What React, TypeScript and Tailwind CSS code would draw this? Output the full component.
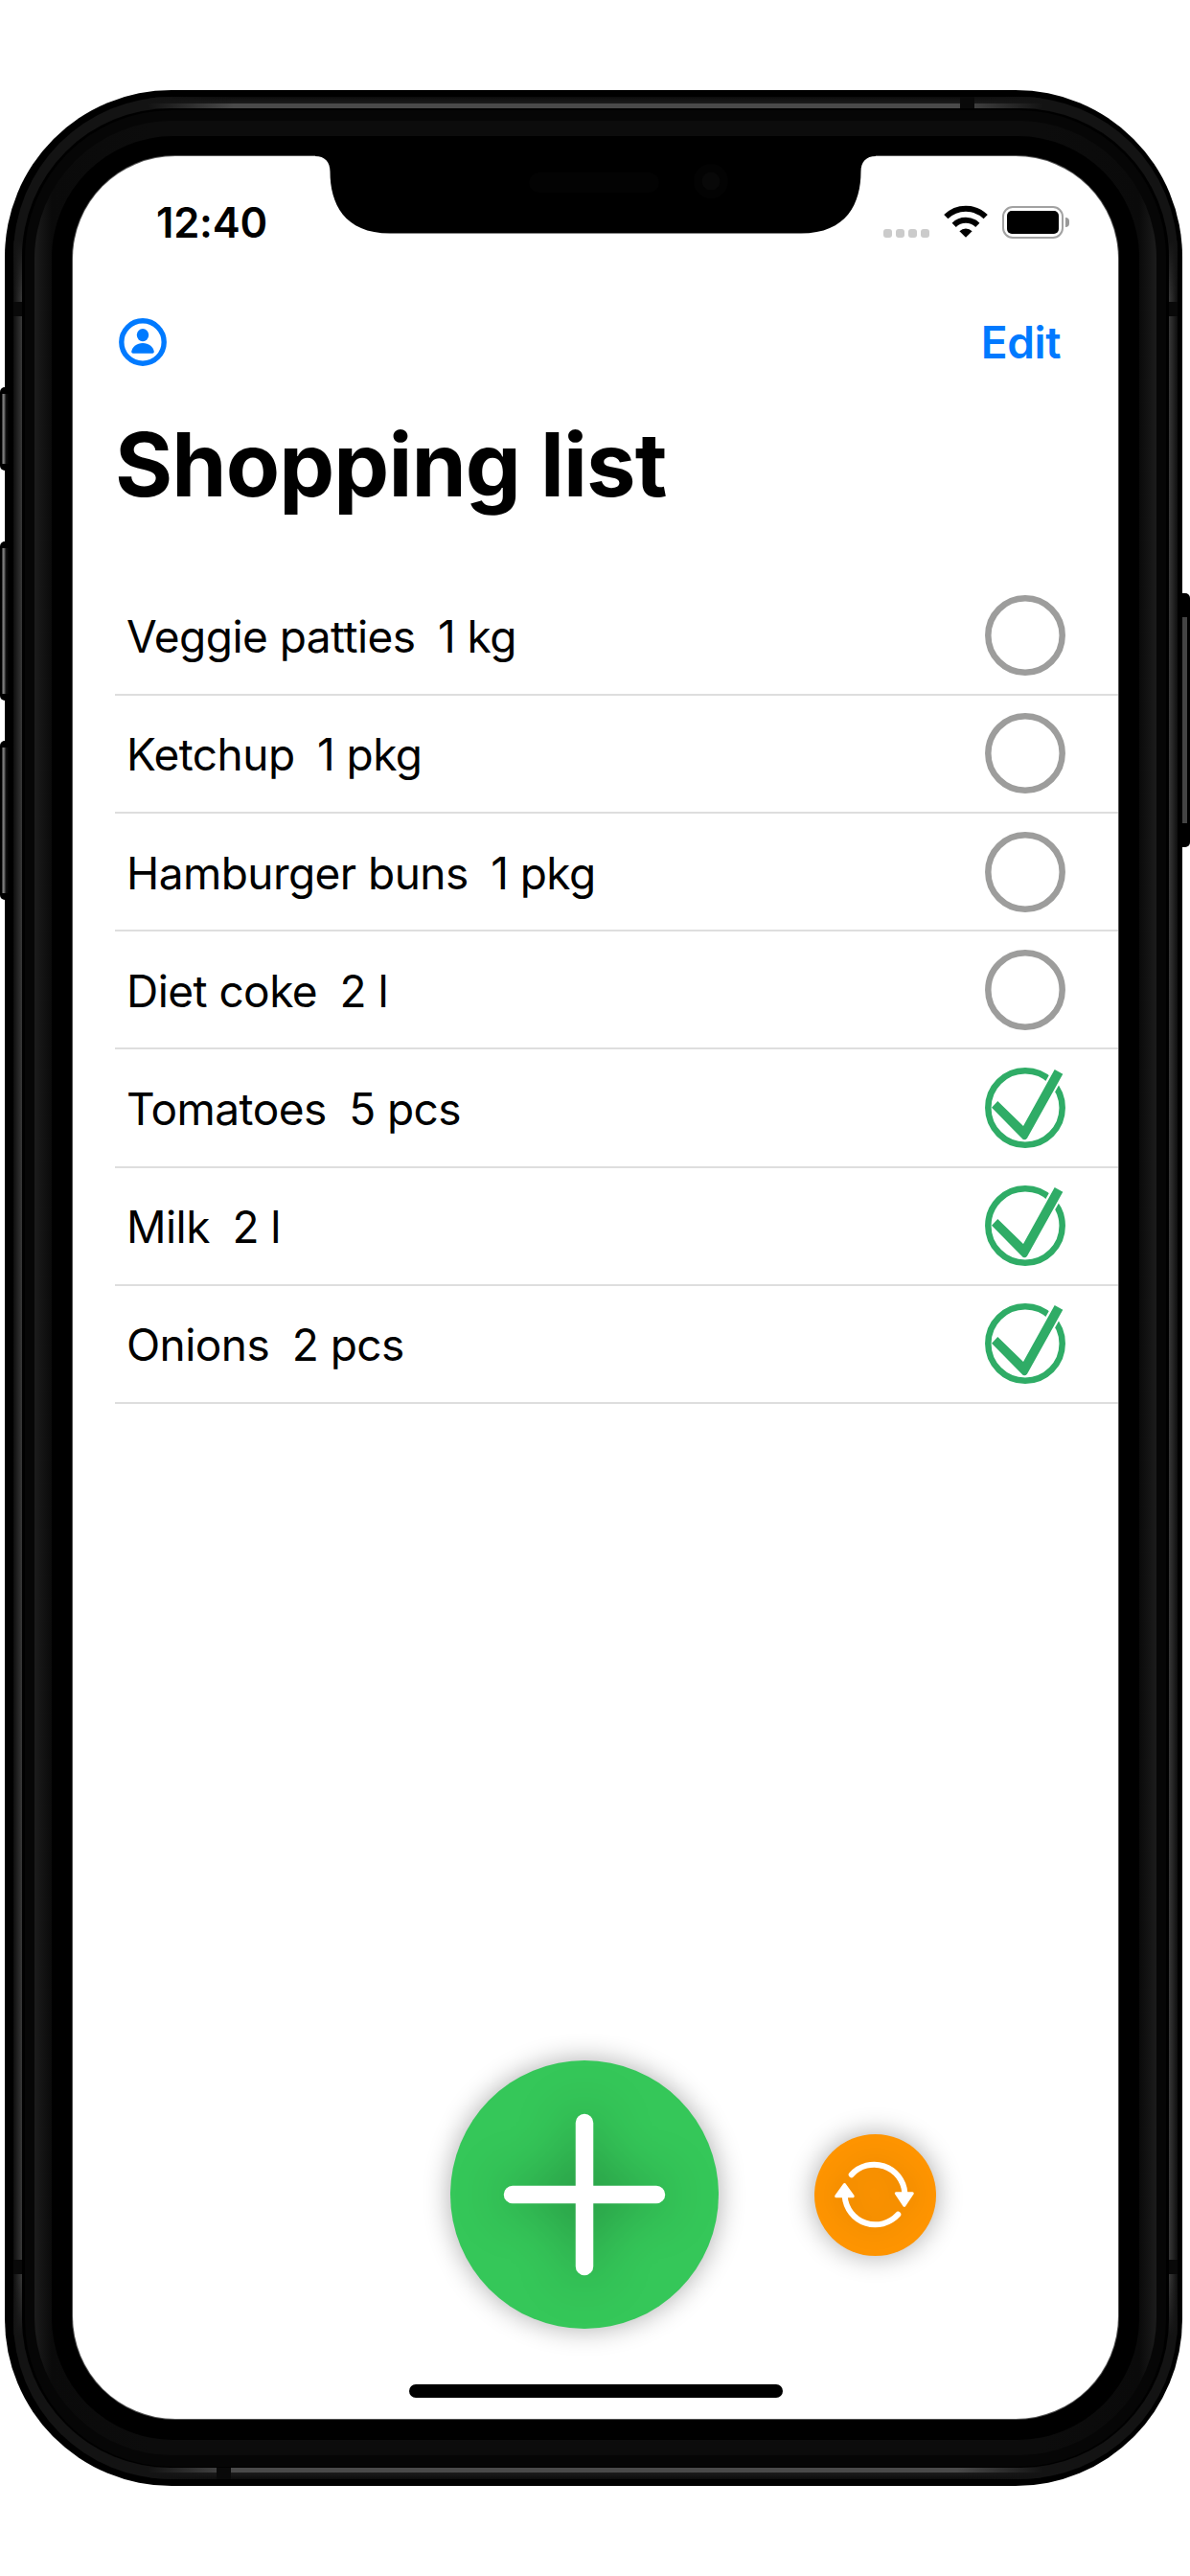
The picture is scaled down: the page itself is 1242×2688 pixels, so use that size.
import React from "react";

type Item = { name: string; qty: string; done: boolean };

const items: Item[] = [
  { name: "Veggie patties", qty: "1 kg", done: false },
  { name: "Ketchup", qty: "1 pkg", done: false },
  { name: "Hamburger buns", qty: "1 pkg", done: false },
  { name: "Diet coke", qty: "2 l", done: false },
  { name: "Tomatoes", qty: "5 pcs", done: true },
  { name: "Milk", qty: "2 l", done: true },
  { name: "Onions", qty: "2 pcs", done: true },
];

function CheckCircle({ done }: { done: boolean }) {
  return (
    <svg className="size-[84px] overflow-visible" viewBox="0 0 84 84" fill="none">
      <circle cx="42" cy="42" r="38.7" stroke={done ? "#2fac66" : "#9d9d9c"} strokeWidth="6.5" />
      {done && (
        <>
          <path d="M55 43 80 -1" stroke="#fff" strokeWidth="14" />
          <path d="M13.3 35 40 61 72.7 2 81.3 6.8 44 73.8Q41.2 76.8 38.5 73.8L7 41.7Z" fill="#2fac66" />
        </>
      )}
    </svg>
  );
}

function PersonIcon() {
  return (
    <svg className="size-[50px]" viewBox="0 0 50 50">
      <circle cx="25" cy="25" r="22.2" fill="none" stroke="#007aff" strokeWidth="5.4" />
      <ellipse cx="25" cy="17.6" rx="6.2" ry="6.6" fill="#007aff" />
      <path d="M15 36.8C13.5 36.8 13.1 35.9 13.3 34.6 14.2 29.6 18.8 26 25 26s10.8 3.6 11.7 8.6c.2 1.3-.2 2.2-1.7 2.2Z" fill="#007aff" />
    </svg>
  );
}

function WifiIcon() {
  return (
    <svg className="h-[34px] w-[46px]" viewBox="0 0 46 34" fill="none" stroke="#000" strokeWidth="6">
      <path d="M2.3 12.2A29.5 29.5 0 0 1 43.7 12.2" />
      <path d="M10.7 20.8A17.5 17.5 0 0 1 35.3 20.8" />
      <path d="M16.4 27.2A9.5 9.5 0 0 1 29.6 27.2L23 33.8Z" fill="#000" stroke="none" />
    </svg>
  );
}

function Battery() {
  return (
    <div className="flex items-center gap-[2.5px]">
      <div className="h-[34px] w-[63.5px] rounded-[11px] border-[2.5px] border-[#a2a2a2] p-[3px]">
        <div className="h-full rounded-[5px] bg-black" />
      </div>
      <div className="h-[10px] w-[4px] rounded-r-full bg-[#999]" />
    </div>
  );
}

function Notch() {
  return (
    <svg className="absolute left-[254px] top-0 h-[83px] w-[585px]" viewBox="0 0 585 83">
      <path
        d="M0 0V1C10 1 15.5 7 15.5 17C15.5 50 30 81.5 78 81.5H507C555 81.5 569.5 50 569.5 17C569.5 7 575 1 585 1V0Z"
        fill="#000"
      />
      <rect x="223" y="18" width="136" height="21" rx="10.5" fill="#030303" />
      <circle cx="413" cy="27" r="18" fill="#030303" />
      <circle cx="413" cy="27" r="9.5" fill="#080808" />
    </svg>
  );
}

function StatusBar() {
  return (
    <div className="flex h-[138px] items-start justify-between pl-[87px] pr-[51px] pt-[51px]">
      <span className="text-[43.5px] font-semibold leading-[36px] tracking-[-0.2px]">12:40</span>
      <div className="flex items-start">
        <div className="mt-[25.5px] flex gap-[4.5px]">
          {[0, 1, 2, 3].map((n) => (
            <span key={n} className="size-[8.6px] rounded-[3px] bg-[#cbcbcb]" />
          ))}
        </div>
        <div className="ml-[15px]">
          <WifiIcon />
        </div>
        <div className="ml-[15px] mt-px">
          <Battery />
        </div>
      </div>
    </div>
  );
}

function RefreshIcon() {
  return (
    <svg className="size-[120px] drop-shadow-[0_0_16px_rgba(0,0,0,0.2)]" viewBox="-60 -60 120 120" fill="none" stroke="#fff" strokeWidth="6" strokeLinecap="round" strokeLinejoin="round">
      <path d="M-24.3-20.8A32 32 0 0 1 31.3-2" />
      <path d="M24.3 20.8A32 32 0 0 1-31.3 2" />
      <path d="M22.3-1.3H39.3L30.8 11.3Z" fill="#fff" strokeWidth="3" />
      <path d="M-22.8 1.7H-40.3L-31.5-10.5Z" fill="#fff" strokeWidth="3" />
    </svg>
  );
}

function Screen() {
  return (
    <div className="flex h-full flex-col overflow-hidden rounded-[107px] bg-white">
      <StatusBar />
      <header className="flex h-[112px] items-center justify-between pl-[47.5px] pr-[60px]">
        <PersonIcon />
        <span className="text-[46px] font-[560] leading-none tracking-[-0.4px] text-[#007aff]">Edit</span>
      </header>
      <h1 className="h-[190px] pl-[44px] pt-[17px] text-[92px] font-bold leading-[110px] tracking-[-0.9px]">Shopping list</h1>
      <ul className="ml-[44px]">
        {items.map((item) => (
          <li
            key={item.name}
            className="flex h-[123.16px] items-center justify-between border-b-2 border-[#dedede] pl-[12px] pr-[55.5px] text-[46px] tracking-[-0.55px]"
          >
            <span className="flex gap-[23.5px] pt-[3px]">
              <span>{item.name}</span>
              <span>{item.qty}</span>
            </span>
            <CheckCircle done={item.done} />
          </li>
        ))}
      </ul>
      <div className="mt-auto flex items-center pl-[394px]">
        <button className="flex size-[280px] items-center justify-center rounded-full bg-[#35c759] shadow-[0_0_28px_rgba(0,0,0,0.33)]">
          <svg className="size-[280px] drop-shadow-[0_0_28px_rgba(0,0,0,0.36)]" viewBox="-55 -55 280 280" stroke="#fff" strokeWidth="18.5" strokeLinecap="round">
            <path d="M85 10V160M10 85H160" />
          </svg>
        </button>
        <button className="ml-[100px] flex size-[126.5px] items-center justify-center rounded-full bg-[#ff9500] shadow-[0_0_28px_rgba(0,0,0,0.33)]">
          <RefreshIcon />
        </button>
      </div>
      <div className="mx-auto mb-[22px] mt-[58px] h-[14px] w-[390px] rounded-full bg-black" />
    </div>
  );
}

function SideButton({ className }: { className: string }) {
  return (
    <div className={`absolute left-0 w-[9px] rounded-l-[5px] bg-black py-[7px] pl-[2px] ${className}`}>
      <div className="h-full w-[7px] bg-[linear-gradient(90deg,#2a2a2a,#888_25%,#555_40%,#111_60%,#000)]" />
    </div>
  );
}

export default function App() {
  return (
    <main className="relative h-[2688px] w-[1242px] overflow-hidden bg-white pl-[5px] pt-[94px] font-[Inter,sans-serif] text-black">
      {/* Outer steel band */}
      <div className="h-[2500px] w-[1229px] rounded-[174px] bg-black pb-[7px] pl-[9px] pr-[5px] pt-[7px]">
        <div className="relative h-full overflow-hidden rounded-[165px] bg-[#131313] px-[9px] py-[12px]">
          <div className="absolute inset-y-[150px] left-0 w-[9px] bg-[linear-gradient(180deg,#131313,transparent_60px,transparent_calc(100%-60px),#131313),linear-gradient(90deg,#0e0e0e,#383838)]" />
          <div className="absolute inset-y-[150px] right-0 w-[9px] bg-[linear-gradient(180deg,#131313,transparent_60px,transparent_calc(100%-60px),#131313),linear-gradient(270deg,#0e0e0e,#383838)]" />
          <div className="absolute inset-x-[140px] top-0 h-[12px] bg-[linear-gradient(90deg,#131313,transparent_90px,transparent_calc(100%-90px),#131313),linear-gradient(180deg,#0c0c0c,#1c1c1c_7px,#4a4a4a_7px,#4a4a4a)]" />
          <div className="absolute inset-x-[140px] bottom-0 h-[12px] bg-[linear-gradient(90deg,#131313,transparent_90px,transparent_calc(100%-90px),#131313),linear-gradient(0deg,#0c0c0c,#1c1c1c_7px,#4a4a4a_7px,#4a4a4a)]" />
          {/* Antenna bands */}
          <div className="absolute inset-x-0 top-[214px] h-[15px] bg-[#090909]" />
          <div className="absolute inset-x-0 bottom-[214px] h-[15px] bg-[#090909]" />
          <div className="absolute left-[988px] top-0 h-[12px] w-[15px] bg-[#090909]" />
          <div className="absolute bottom-0 left-[212px] h-[12px] w-[15px] bg-[#090909]" />
          {/* Inner bezel rings */}
          <div className="relative h-full rounded-[155px] bg-black px-[3px] pb-[1px] pt-[2px]">
            <div className="h-full rounded-[153px] bg-[#060606] px-[10px] pb-[12px] pt-[10.5px]">
              <div className="h-full rounded-[144px] bg-[linear-gradient(90deg,#1c1c1c,#0a0a0a_18px,#0c0c0c_120px,#0c0c0c_calc(100%-120px),#0a0a0a_calc(100%-18px),#1c1c1c)] px-[18px] py-[16.25px]">
                <div className="h-full rounded-[127px] bg-black px-[21px] pb-[20.5px] pt-[20px]">
                  <div className="relative h-full rounded-[108px] bg-[#555] p-px">
                    <Screen />
                    <Notch />
                  </div>
                </div>
              </div>
            </div>
          </div>
        </div>
      </div>
      <SideButton className="top-[404px] h-[87px]" />
      <SideButton className="top-[565px] h-[166px]" />
      <SideButton className="top-[773px] h-[166px]" />
      <div className="absolute right-0 top-[619px] h-[265px] w-[8px] rounded-r-[5px] bg-black py-[25px] pr-[3.5px]">
        <div className="h-full bg-[#444]" />
      </div>
    </main>
  );
}
